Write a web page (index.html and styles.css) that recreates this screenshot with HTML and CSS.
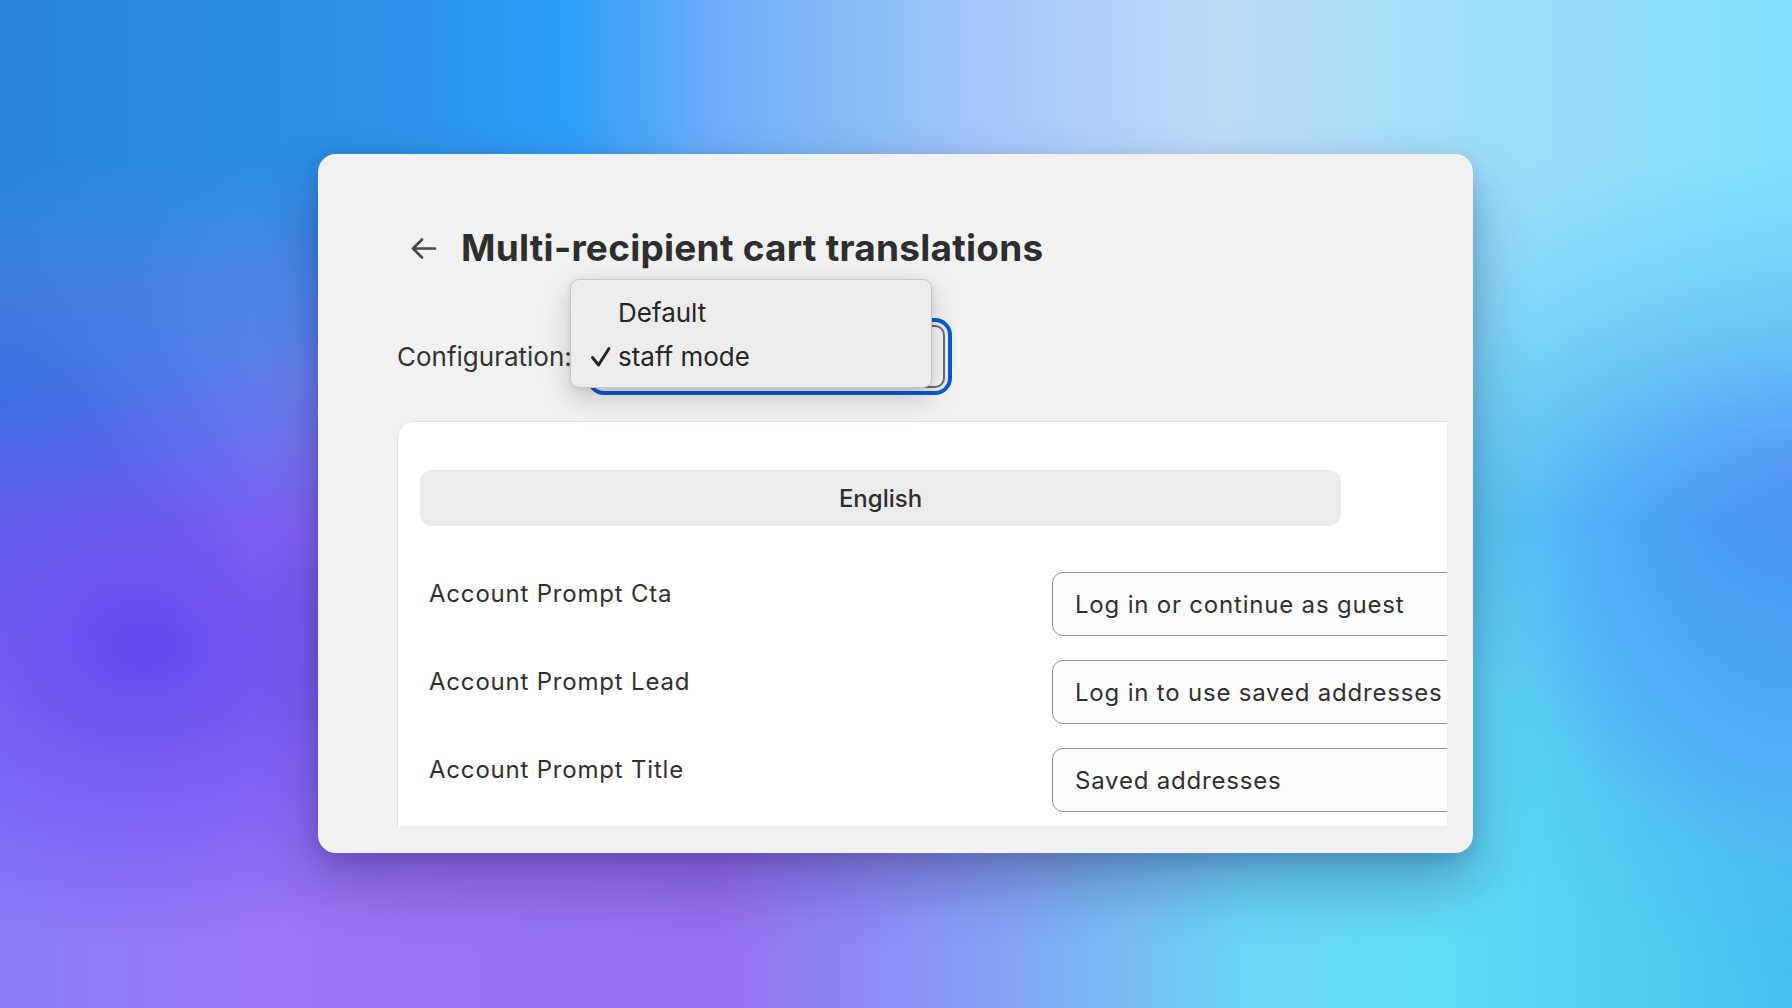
FILE: index.html
```html
<!DOCTYPE html>
<html lang="en">
<head>
<meta charset="utf-8">
<title>Multi-recipient cart translations</title>
<link rel="stylesheet" href="styles.css">
</head>
<body>
<div class="card">
  <header class="head">
    <svg class="back" width="28" height="28" viewBox="0 0 28 28" aria-hidden="true">
      <path d="M26 14.5H4M13 5.5L4 14.5L13 23.5" fill="none" stroke="#484848" stroke-width="2.7" stroke-linecap="round" stroke-linejoin="round"/>
    </svg>
    <h1 class="title">Multi-recipient cart translations</h1>
  </header>

  <div class="config">
    <span class="config-label">Configuration:</span>
    <div class="select-wrap">
      <div class="select"></div>
      <ul class="menu">
        <li class="menu-item">Default</li>
        <li class="menu-item is-checked">
          <svg class="check" width="22" height="24" viewBox="0 0 22 24" aria-hidden="true">
            <path d="M2.5 12.5L8.5 20L19 3.5" fill="none" stroke="#262626" stroke-width="3" stroke-linecap="round" stroke-linejoin="round"/>
          </svg>
          staff mode
        </li>
      </ul>
    </div>
  </div>

  <div class="viewport">
    <section class="panel">
      <div class="tab">English</div>
      <div class="rows">
        <div class="row">
          <span class="row-label">Account Prompt Cta</span>
          <div class="input">Log in or continue as guest</div>
        </div>
        <div class="row">
          <span class="row-label">Account Prompt Lead</span>
          <div class="input">Log in to use saved addresses</div>
        </div>
        <div class="row">
          <span class="row-label">Account Prompt Title</span>
          <div class="input">Saved addresses</div>
        </div>
      </div>
    </section>
  </div>
</div>
</body>
</html>
```

FILE: styles.css
```css
* { box-sizing: border-box; }

html, body {
  margin: 0;
  padding: 0;
  width: 1792px;
  height: 1008px;
  overflow: hidden;
}

body {
  position: relative;
  font-family: Inter, "Noto Sans", "Liberation Sans", sans-serif;
  color: #303030;
  background-color: #7a84f4;
  background-image:
    radial-gradient(ellipse 400px 300px at 8% 64%, #6448ef 0%, rgba(100,72,239,0) 100%),
    radial-gradient(ellipse 320px 260px at 0% 40%, #4462e4 0%, rgba(68,98,228,0) 100%),
    radial-gradient(ellipse 380px 380px at 100% 46%, #4a8cf5 0%, rgba(74,140,245,0) 100%),
    radial-gradient(ellipse 300px 260px at 100% 72%, #52b8f4 0%, rgba(82,184,244,0) 100%),
    linear-gradient(90deg, #8a7cf8 0%, #9878f6 14%, #9670f2 40%, #84a4f5 56%, #68d8f8 70%, #62dcf8 80%, #46c0f0 100%);
}

/* top band of the backdrop */
body::before {
  content: "";
  position: absolute;
  inset: 0;
  z-index: 0;
  background: linear-gradient(90deg, #2684d6 0%, #2a92e8 22%, #2f9ff8 32%, #6caff8 40%, #a6caf8 56%, #bddcfa 68%, #9ae0f8 84%, #82e0fa 100%);
  -webkit-mask-image: linear-gradient(to bottom, #000 0%, #000 16%, rgba(0,0,0,0.6) 32%, transparent 52%);
  mask-image: linear-gradient(to bottom, #000 0%, #000 16%, rgba(0,0,0,0.6) 32%, transparent 52%);
}

/* ---------- card ---------- */
.card {
  position: relative;
  z-index: 1;
  width: 1155px;
  height: 699px;
  margin: 154px 0 0 318px;
  padding: 72px 26px 27px 79px;
  background: #f1f1f1;
  border-radius: 18px;
  box-shadow: 0 30px 60px rgba(30, 20, 80, 0.32), 0 6px 18px rgba(20, 20, 60, 0.14);
  display: flex;
  flex-direction: column;
}

.head {
  display: flex;
  align-items: center;
  height: 44px;
  padding-left: 12px;
  gap: 24px;
}

.back { display: block; flex: none; }

.title {
  margin: 0;
  font-size: 37px;
  line-height: 44px;
  font-weight: 700;
  letter-spacing: 0.25px;
  color: #2e2e2e;
  white-space: nowrap;
}

/* ---------- configuration ---------- */
.config {
  margin-top: 55px;
  height: 63px;
  display: flex;
  align-items: center;
  gap: 24px;
}

.config-label {
  font-size: 26px;
  line-height: 32px;
  color: #333;
  width: 173px;
  white-space: nowrap;
}

.select-wrap {
  position: relative;
  width: 351px;
  height: 63px;
}

.select {
  width: 100%;
  height: 100%;
  border: 2px solid #6b6b6b;
  border-radius: 10px;
  background: #f6f6f6;
  box-shadow: 0 0 0 3px #ececec, 0 0 0 7px #0a5ad2;
}

.menu {
  position: absolute;
  left: -24px;
  top: -46px;
  width: 362px;
  height: 109px;
  margin: 0;
  padding: 11px 0 9px;
  list-style: none;
  background: #ececec;
  border: 1px solid #c6c6c6;
  border-radius: 9px;
  box-shadow: 0 10px 28px rgba(0, 0, 0, 0.18), 0 2px 6px rgba(0, 0, 0, 0.08);
}

.menu-item {
  position: relative;
  height: 44px;
  line-height: 44px;
  padding-left: 47px;
  font-size: 26px;
  color: #262626;
}

.check {
  position: absolute;
  left: 19px;
  top: 10px;
}

/* ---------- panel ---------- */
.viewport {
  margin-top: 33px;
  flex: 1;
  overflow: hidden;
}

.panel {
  width: 1200px;
  height: 520px;
  background: #ffffff;
  border: 1px solid #e2e2e2;
  border-radius: 16px 16px 0 0;
  padding: 48px 0 0 22px;
}

.tab {
  width: 921px;
  height: 56px;
  border-radius: 12px;
  background: #ebebeb;
  display: flex;
  align-items: center;
  justify-content: center;
  font-size: 24px;
  font-weight: 500;
  color: #2e2e2e;
}

.rows {
  margin-top: 46px;
  padding-left: 9px;
  display: flex;
  flex-direction: column;
  gap: 24px;
}

.row {
  display: grid;
  grid-template-columns: 623px 480px;
  align-items: start;
  height: 64px;
}

.row-label {
  padding-top: 7px;
  font-size: 24px;
  line-height: 30px;
  letter-spacing: 0.8px;
  color: #303030;
  white-space: nowrap;
}

.input {
  height: 64px;
  border: 1px solid #8e8e8e;
  border-radius: 11px;
  background: #fdfdfd;
  padding-left: 22px;
  display: flex;
  align-items: center;
  font-size: 24px;
  letter-spacing: 0.8px;
  color: #303030;
  white-space: nowrap;
}
```
